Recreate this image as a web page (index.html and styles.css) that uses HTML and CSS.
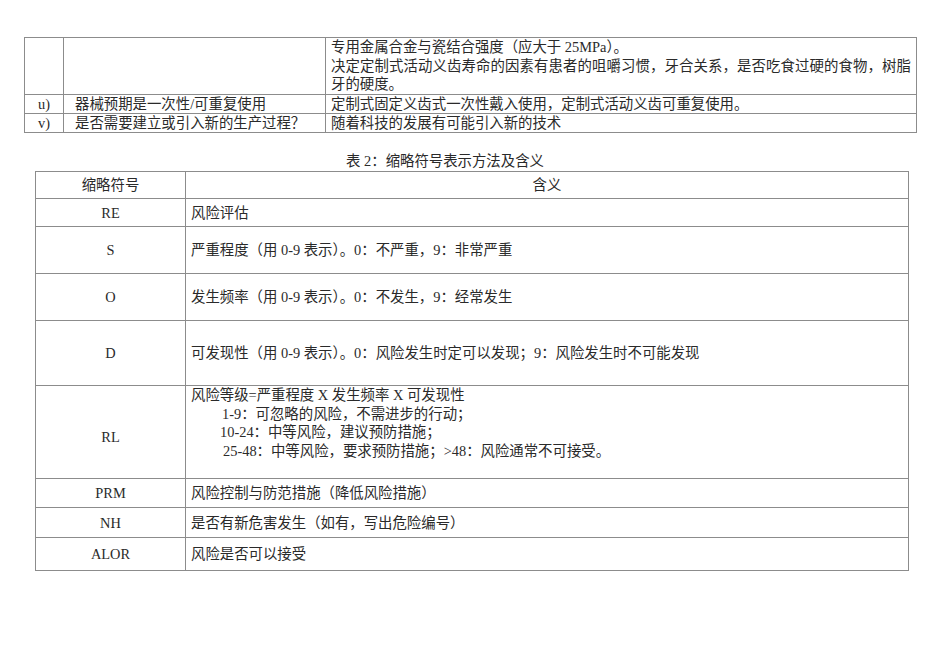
FILE: index.html
```html
<!DOCTYPE html>
<html lang="zh-CN">
<head>
<meta charset="utf-8">
<title>风险分析表</title>
<link rel="stylesheet" href="styles.css">
</head>
<body>
<div class="page">
  <table class="t1">
    <colgroup>
      <col class="c1a">
      <col class="c1b">
      <col>
    </colgroup>
    <tr class="r-tall">
      <td></td>
      <td></td>
      <td class="top">
        <div class="ln">专用金属合金与瓷结合强度（应大于 25MPa）。</div>
        <div class="ln just">决定定制式活动义齿寿命的因素有患者的咀嚼习惯，牙合关系，是否吃食过硬的食物，树脂</div>
        <div class="ln">牙的硬度。</div>
      </td>
    </tr>
    <tr class="r-line">
      <td class="ctr">u)</td>
      <td class="ind">器械预期是一次性/可重复使用</td>
      <td>定制式固定义齿式一次性戴入使用，定制式活动义齿可重复使用。</td>
    </tr>
    <tr class="r-line">
      <td class="ctr">v)</td>
      <td class="ind">是否需要建立或引入新的生产过程？</td>
      <td>随着科技的发展有可能引入新的技术</td>
    </tr>
  </table>

  <div class="caption">表 2：缩略符号表示方法及含义</div>

  <table class="t2">
    <colgroup>
      <col class="c2a">
      <col>
    </colgroup>
    <tr class="h27">
      <td class="ctr">缩略符号</td>
      <td class="ctr">含义</td>
    </tr>
    <tr class="h28">
      <td class="ctr">RE</td>
      <td>风险评估</td>
    </tr>
    <tr class="h46">
      <td class="ctr">S</td>
      <td>严重程度（用 0-9 表示）。0：不严重，9：非常严重</td>
    </tr>
    <tr class="h47">
      <td class="ctr">O</td>
      <td>发生频率（用 0-9 表示）。0：不发生，9：经常发生</td>
    </tr>
    <tr class="h65">
      <td class="ctr">D</td>
      <td>可发现性（用 0-9 表示）。0：风险发生时定可以发现；9：风险发生时不可能发现</td>
    </tr>
    <tr class="h93">
      <td class="ctr rl">RL</td>
      <td class="top">
        <div class="ln2">风险等级=严重程度 X 发生频率 X 可发现性</div>
        <div class="ln2 i1">1-9：可忽略的风险，不需进步的行动；</div>
        <div class="ln2 i2">10-24：中等风险，建议预防措施；</div>
        <div class="ln2 i3">25-48：中等风险，要求预防措施；&gt;48：风险通常不可接受。</div>
      </td>
    </tr>
    <tr class="h29">
      <td class="ctr">PRM</td>
      <td>风险控制与防范措施（降低风险措施）</td>
    </tr>
    <tr class="h30">
      <td class="ctr">NH</td>
      <td>是否有新危害发生（如有，写出危险编号）</td>
    </tr>
    <tr class="h33">
      <td class="ctr">ALOR</td>
      <td>风险是否可以接受</td>
    </tr>
  </table>
</div>
</body>
</html>
```

FILE: styles.css
```css
html, body {
  margin: 0;
  padding: 0;
  background: #ffffff;
}

body {
  font-family: "Liberation Serif", "Noto Sans CJK SC", serif;
  font-size: 14.4px;
  color: #2a2a2a;
}

.page {
  padding-top: 37px;
}

table {
  border-collapse: collapse;
  table-layout: fixed;
}

td {
  border: 1px solid #8c8c8c;
  padding: 0 5px;
  line-height: 18px;
  vertical-align: middle;
  white-space: nowrap;
  overflow: hidden;
}

td.top {
  vertical-align: top;
}

td.ctr {
  text-align: center;
  padding: 0;
}

td.ind {
  padding-left: 11px;
}

/* table 1 */
.t1 {
  margin-left: 24px;
  width: 893px;
}

.c1a { width: 39px; }
.c1b { width: 262px; }

.t1 .r-tall { height: 56px; }
.t1 .r-line { height: 18px; }

.ln {
  line-height: 18.67px;
}

.just {
  text-align: justify;
  text-align-last: justify;
}

/* caption */
.caption {
  width: 893px;
  margin: 19px 0 0 24px;
  padding-right: 51px;
  box-sizing: border-box;
  text-align: center;
  line-height: 19px;
  height: 19px;
}

/* table 2 */
.t2 {
  margin-left: 35px;
  width: 874px;
}

.c2a { width: 150px; }

.h27 { height: 27px; }
.h28 { height: 28px; }
.h29 { height: 29px; }
.h30 { height: 30px; }
.h33 { height: 33px; }
.h46 { height: 47px; }
.h47 { height: 47px; }
.h65 { height: 65px; }
.h93 { height: 93px; }

.ln2 {
  line-height: 18.7px;
}

.i1 { padding-left: 31px; }
.i2 { padding-left: 29px; }
.i3 { padding-left: 32px; }

td.rl {
  padding-top: 10px;
}
```
